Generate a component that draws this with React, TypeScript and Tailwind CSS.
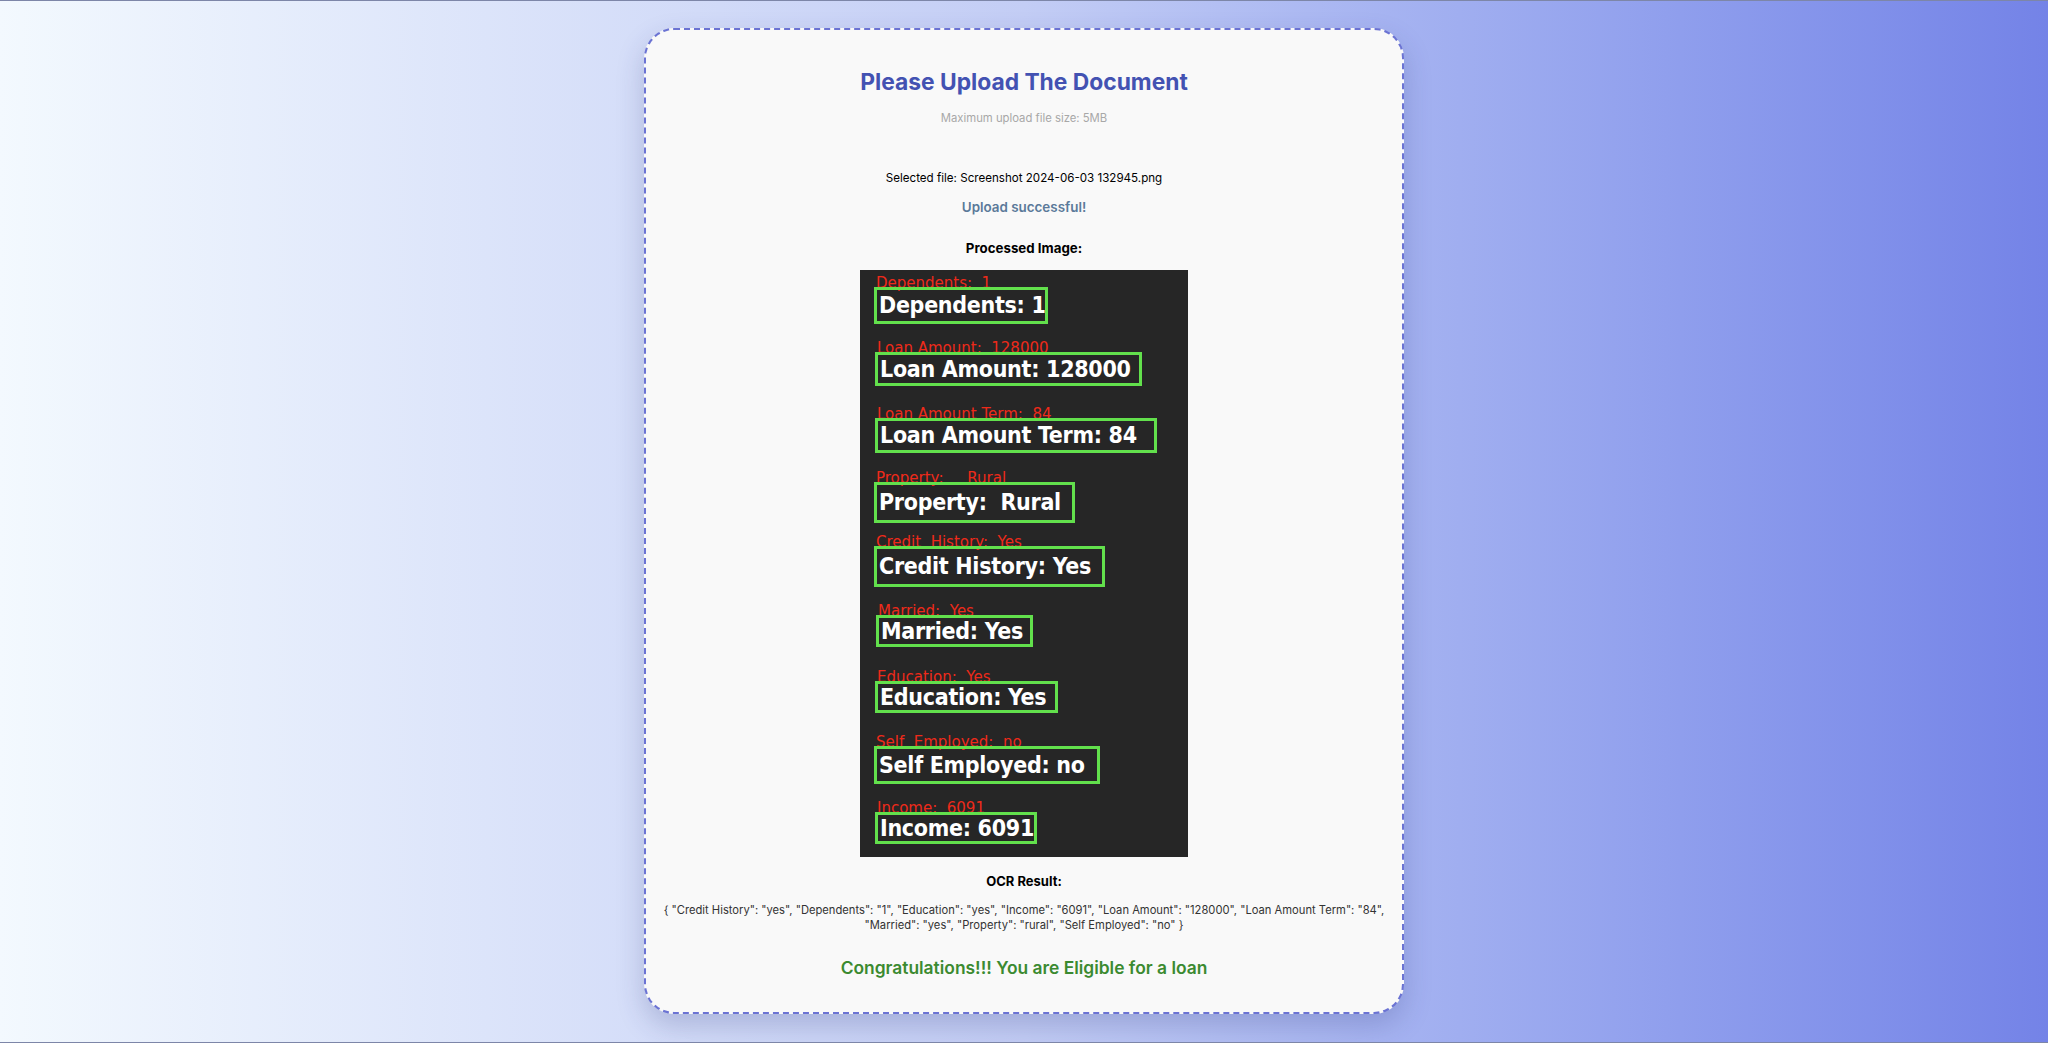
import React from "react";

type OcrBox = {
  red: string;
  white: string;
  left: number;
  top: number;
  w: number;
  h: number;
};

const boxes: OcrBox[] = [
  { red: "Dependents:  1", white: "Dependents: 1", left: 14, top: 17, w: 174, h: 37 },
  { red: "Loan Amount:  128000", white: "Loan Amount: 128000", left: 15, top: 82, w: 267, h: 34 },
  { red: "Loan Amount Term:  84", white: "Loan Amount Term: 84", left: 15, top: 148, w: 282, h: 35 },
  { red: "Property:     Rural", white: "Property:  Rural", left: 14, top: 212, w: 201, h: 41 },
  { red: "Credit  History:  Yes", white: "Credit History: Yes", left: 14, top: 276, w: 231, h: 41 },
  { red: "Married:  Yes", white: "Married: Yes", left: 16, top: 345, w: 157, h: 32 },
  { red: "Education:  Yes", white: "Education: Yes", left: 15, top: 411, w: 183, h: 32 },
  { red: "Self  Employed:  no", white: "Self Employed: no", left: 14, top: 476, w: 226, h: 38 },
  { red: "Income:  6091", white: "Income: 6091", left: 15, top: 542, w: 162, h: 32 },
];

const ocrText =
  '{ "Credit History": "yes", "Dependents": "1", "Education": "yes", "Income": "6091", "Loan Amount": "128000", "Loan Amount Term": "84", "Married": "yes", "Property": "rural", "Self Employed": "no" }';

const ProcessedImage = () => (
  <div className="relative mx-auto h-[587px] w-[328px] bg-[#262626]">
    {boxes.map((b) => (
      <React.Fragment key={b.white}>
        <div
          className="absolute whitespace-pre font-['DejaVu_Sans',sans-serif] text-[15px] leading-[15px] text-[#ee2a1a]"
          style={{ left: b.left + 2, top: b.top - 11 }}
        >
          {b.red}
        </div>
        <div
          className="absolute flex items-center overflow-hidden border-[3px] border-[#62e04c] pl-[2px] font-['DejaVu_Sans_Condensed','DejaVu_Sans',sans-serif] text-[23px] font-bold tracking-[-0.3px] whitespace-pre text-white"
          style={{ left: b.left, top: b.top, width: b.w, height: b.h }}
        >
          {b.white}
        </div>
      </React.Fragment>
    ))}
  </div>
);

export default function App() {
  return (
    <div className="box-border h-[1043px] w-full overflow-hidden border-y border-[#7d86a8] bg-gradient-to-r from-[#f3f9fe] via-[#c3cdf5] to-[#7483e7] pt-[27px] font-['Inter',sans-serif]">
      <div className="mx-auto box-border h-[986px] w-[760px] rounded-[30px] border-2 border-dashed border-[#6b73d3] bg-[#f9f9f9] px-[14px] pt-[36px] text-center shadow-[0_12px_28px_rgba(40,50,120,0.22)]">
        <h1 className="text-[22.8px] leading-[32px] font-bold text-[#4352b2]">Please Upload The Document</h1>
        <p className="mt-[12px] text-[11.3px] leading-[16px] text-[#a8a8a8]">Maximum upload file size: 5MB</p>

        <p className="mt-[44px] text-[11.6px] leading-[16px] text-black">
          Selected file: Screenshot 2024-06-03 132945.png
        </p>
        <p className="mt-[12px] text-[13.4px] leading-[18px] font-semibold text-[#5b7a9a]">Upload successful!</p>

        <h3 className="mt-[23px] text-[13.3px] leading-[18px] font-bold text-black">Processed Image:</h3>
        <div className="mt-[13px]">
          <ProcessedImage />
        </div>

        <h3 className="mt-[15px] text-[13px] leading-[18px] font-bold text-black">OCR Result:</h3>
        <p className="mt-[13px] text-[11.2px] leading-[14.5px] text-[#333]">{ocrText}</p>

        <p className="mt-[24px] text-[17.4px] leading-[24px] font-semibold text-[#3b8a30]">
          Congratulations!!! You are Eligible for a loan
        </p>
      </div>
    </div>
  );
}
